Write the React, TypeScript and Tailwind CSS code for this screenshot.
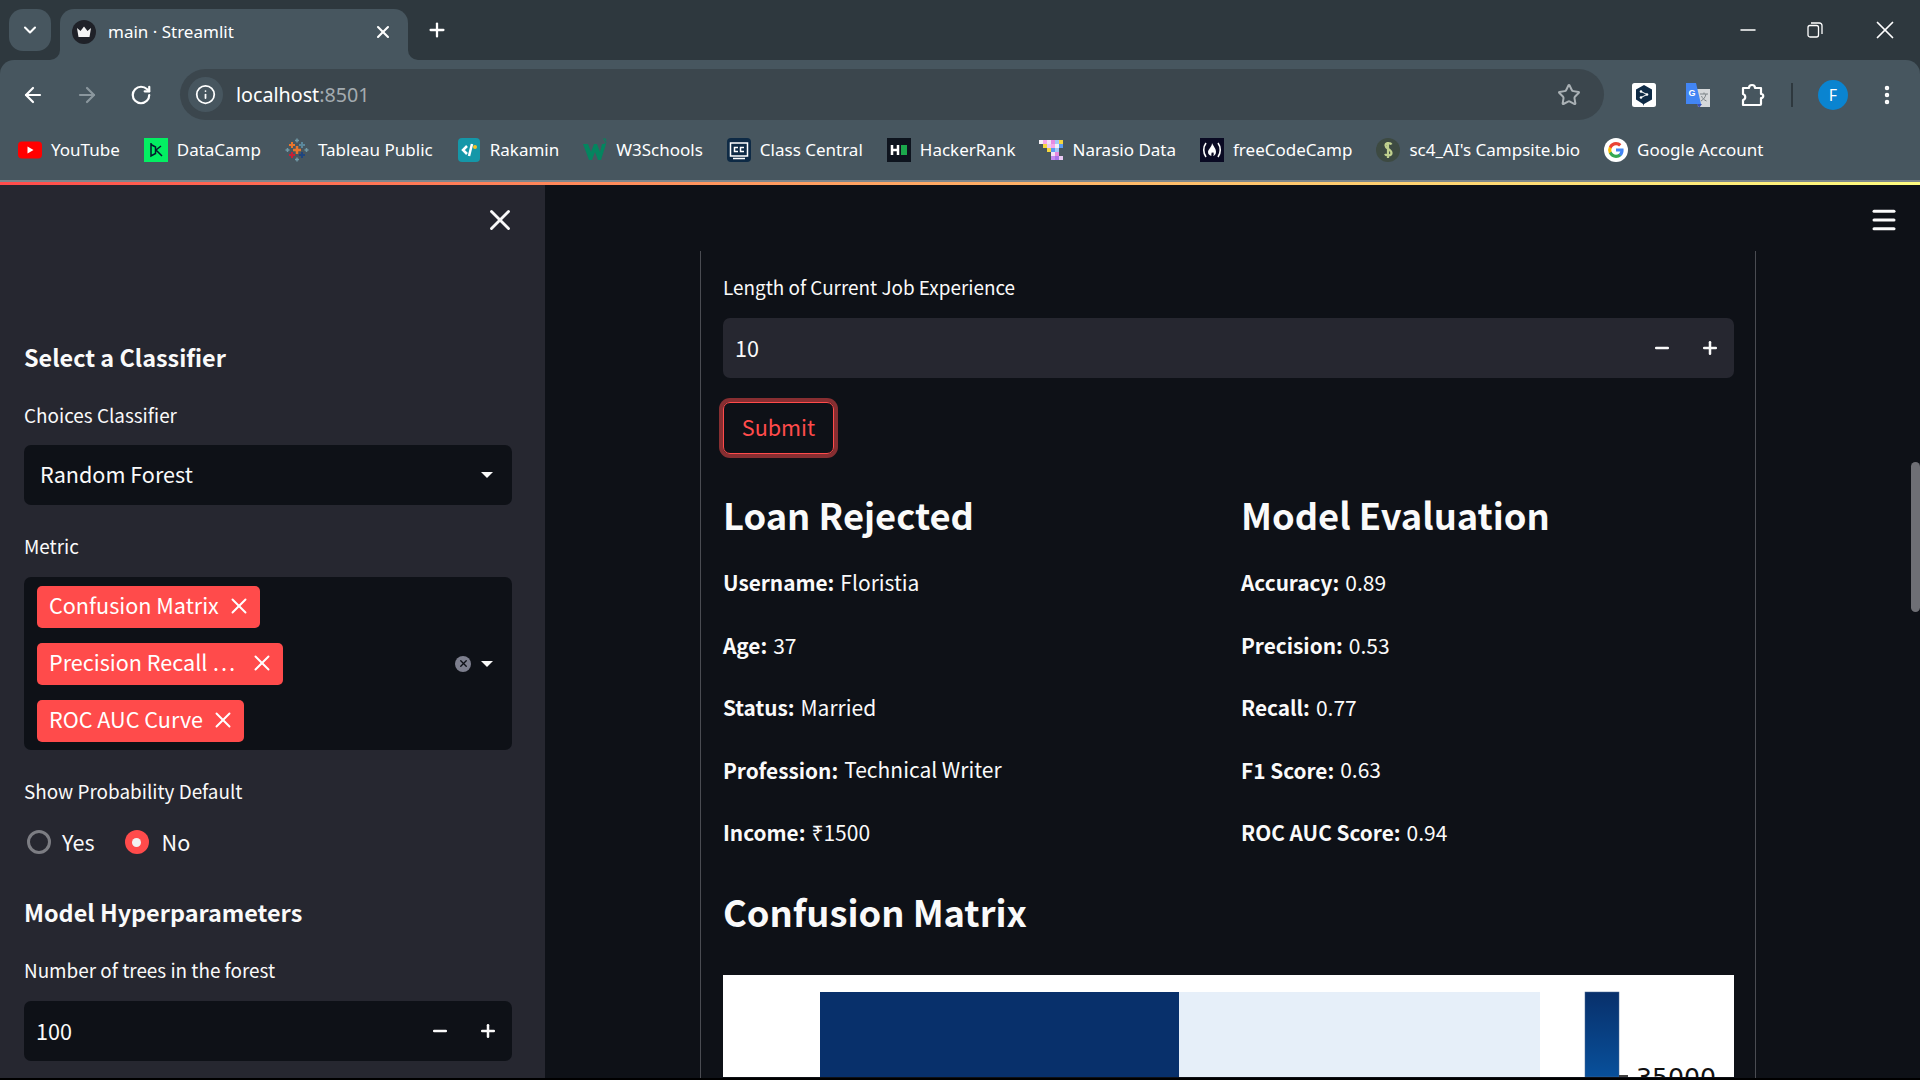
import React from 'react';
import { ArrowLeft, ArrowRight, ChevronDown, Info, Menu, Minus, MoreVertical, Plus, RotateCw, Star, X } from 'lucide-react';

const YouTubeIcon = () => (
  <svg width="24" height="24" viewBox="0 0 24 24">
    <rect x="0" y="3.500" width="24" height="17" rx="4" fill="#f00" />
    <path d="M9.500 8.500v7l6-3.500z" fill="#fff" />
  </svg>
);

const DataCampIcon = () => (
  <svg width="24" height="24" viewBox="0 0 24 24">
    <rect width="24" height="24" fill="#03ef62" />
    <path d="M7 5v13l4.500-2.500V9L7 6.500M12 12l5-4M12 12l6 6" fill="none" stroke="#05192d" strokeWidth="1.500" />
  </svg>
);

const TableauIcon = () => (
  <svg width="24" height="24" viewBox="0 0 24 24" strokeWidth="2" fill="none">
    <path d="M8 12h8M12 8v8" stroke="#e8762d" strokeWidth="2.500" />
    <path d="M4 7h6M7 4v6" stroke="#e8762d" />
    <path d="M14 7h6M17 4v6" stroke="#5b879b" />
    <path d="M4 17h6M7 14v6" stroke="#c72035" />
    <path d="M14 17h6M17 14v6" stroke="#1f457e" />
    <path d="M10 2.500h4M12 .5v4M10 21.500h4M12 19.500v4M.5 12h4M2.500 10v4M19.500 12h4M21.500 10v4" stroke="#7099a6" strokeWidth="1.500" />
  </svg>
);

const RakaminIcon = () => (
  <svg width="24" height="24" viewBox="0 0 24 24">
    <rect x="1" y="0" width="22" height="24" rx="4" fill="#1597a8" />
    <path d="M10 8l-4 4 4 4M15 6l-3 12" fill="none" stroke="#fff" strokeWidth="2.500" />
    <circle cx="18" cy="9" r="2" fill="#f7c325" />
  </svg>
);

const W3Icon = () => (
  <svg width="24" height="24" viewBox="0 0 24 24">
    <path d="M0 6h5l3 8 3-8h3l3 8 2-8h4l-5 16h-3l-3-8-3 8H6z" fill="#04855f" />
    <path d="M20 1h3l-1.500 2c1 0 1.500 .8 1.500 1.500 0 1-1 1.500-2 1.500" fill="none" stroke="#04855f" strokeWidth="1" />
  </svg>
);

const ClassCentralIcon = () => (
  <svg width="24" height="24" viewBox="0 0 24 24">
    <rect width="24" height="24" rx="4" fill="#0e2a45" />
    <rect x="3.500" y="5" width="17" height="13" fill="none" stroke="#fff" strokeWidth="1.500" />
    <path d="M11 9.500H7.500v4H11M17 9.500h-3.500v4H17M6 20.500h12" fill="none" stroke="#fff" strokeWidth="1.500" />
  </svg>
);

const HackerRankIcon = () => (
  <svg width="24" height="24" viewBox="0 0 24 24">
    <rect width="24" height="24" fill="#0e141e" />
    <path d="M5 7v10M11 7v10M5 12h6" stroke="#fff" strokeWidth="2.500" />
    <rect x="14" y="7" width="6" height="10" fill="#1ba94c" />
  </svg>
);

const NarasioIcon = () => {
  const cells: [number, number, string][] = [
    [0, 0, '#f6f1f6'], [4, 0, '#f6a6ea'], [8, 0, '#f2e3f7'], [12, 0, '#e78ae0'], [16, 0, '#a3c8f5'], [20, 0, '#f5d63d'],
    [4, 4, '#f5d63d'], [8, 4, '#e8c9f5'], [12, 4, '#f6a6ea'], [16, 4, '#f0f0f8'], [20, 4, '#5d9bf0'],
    [8, 8, '#f5d63d'], [12, 8, '#5d9bf0'], [16, 8, '#a3c8f5'],
    [16, 12, '#e78ae0'], [12, 12, '#f2e3f7'],
    [12, 16, '#c58af0'], [16, 16, '#a874ea'], [20, 16, '#e8c9f5'],
  ];
  return (
    <svg width="24" height="24" viewBox="0 0 24 24">
      {cells.map(([x, y, c]) => (
        <rect key={`${x}-${y}`} x={x} y={y + 2} width="4" height="4" fill={c} />
      ))}
    </svg>
  );
};

const FreeCodeCampIcon = () => (
  <svg width="24" height="24" viewBox="0 0 24 24">
    <rect width="24" height="24" fill="#0a0a23" />
    <path d="M6 5c-3 4-3 10 0 14M18 5c3 4 3 10 0 14" fill="none" stroke="#fff" strokeWidth="1.600" />
    <path d="M12 5c1 3 4 5 4 9 0 2.500-2 4-3 4 1-1 1-2.500 0-4-.5 1-1 1-1.500 .5 .2 1.500-.5 2.500 0 3.500-1.500-.3-3.500-1.500-3.500-4 0-3 4-5 4-9z" fill="#fff" />
  </svg>
);

const ChainIcon = () => (
  <svg width="24" height="24" viewBox="0 0 24 24">
    <circle cx="12" cy="12" r="12" fill="#3d4a42" />
    <path d="M15.500 6.500c-1-2-6-2-6 1 0 3.500 6 3.500 6 7.500 0 3-5.500 3-6.500 1M12 4v16" fill="none" stroke="#c0d08e" strokeWidth="2.200" />
  </svg>
);

const GoogleIcon = () => (
  <svg width="24" height="24" viewBox="0 0 24 24">
    <circle cx="12" cy="12" r="12" fill="#fff" />
    <path d="M19.600 12.200c0-.6-.05-1.100-.15-1.600H12v3h4.300c-.2 1-.75 1.800-1.600 2.400v2h2.550c1.500-1.400 2.350-3.400 2.350-5.800z" fill="#4285f4" />
    <path d="M12 20c2.150 0 3.950-.7 5.250-1.950l-2.550-2c-.7.5-1.600.75-2.700.75-2.050 0-3.800-1.400-4.450-3.250H4.950v2.050C6.250 18.200 8.950 20 12 20z" fill="#34a853" />
    <path d="M7.550 13.550c-.35-1-.35-2.100 0-3.100V8.400h-2.600a8 8 0 0 0 0 7.200z" fill="#fbbc05" />
    <path d="M12 7.200c1.200 0 2.250.4 3.100 1.200l2.250-2.250C15.950 4.800 14.150 4 12 4 8.950 4 6.250 5.800 4.950 8.400l2.600 2.050C8.200 8.600 9.950 7.200 12 7.200z" fill="#ea4335" />
  </svg>
);

const DeepLIcon = () => (
  <svg width="24" height="24" viewBox="0 0 24 24">
    <rect width="24" height="24" rx="2.500" fill="#fff" />
    <path d="M12 2l8 4.500v10L12 21l-1 2v-2l-7-4.500v-10z" fill="#0f2b46" />
    <path d="M9 8.500l6 3-6 3" fill="none" stroke="#fff" strokeWidth="1" />
    <circle cx="9" cy="8.500" r="1.300" fill="#fff" />
    <circle cx="15" cy="11.500" r="1.300" fill="#fff" />
    <circle cx="9" cy="14.500" r="1.300" fill="#fff" />
  </svg>
);

const TranslateIcon = () => (
  <svg width="24" height="24" viewBox="0 0 24 24">
    <path d="M10 6h14v18H12z" fill="#d5d8da" />
    <path d="M14 11h8M18 9.500v1.500M20 11c-.5 3-2.500 5.500-5 7M15.500 13c.8 2 2.500 4 5 5" fill="none" stroke="#7d8488" strokeWidth="1" />
    <path d="M0 0h10l5 21H0z" fill="#4285f4" />
    <path d="M11 21h5l-3 4z" fill="#3a4fb3" />
    <text x="2.500" y="13" fontSize="9" fontWeight="700" fill="#fff" fontFamily="Liberation Sans, sans-serif">G</text>
  </svg>
);

const ExtensionIcon = () => (
  <svg width="24" height="24" viewBox="0 0 24 24" fill="none" stroke="#fff" strokeWidth="2.200" strokeLinejoin="round">
    <path d="M2 5h6c0-4 6-4 6 0h6v6c3 0 3 4 0 4v6a1 1 0 0 1-1 1H2v-5c3-1 3-5 0-6z" />
  </svg>
);

const RestoreIcon = () => (
  <svg width="16" height="16" viewBox="0 0 16 16" fill="none" stroke="#fff" strokeWidth="1.300">
    <rect x="1" y="3.500" width="10.500" height="11.500" rx="2" />
    <path d="M4 1h8.500A2.500 2.500 0 0 1 15 3.500V12" />
  </svg>
);

const CrownFavicon = () => (
  <svg width="24" height="24" viewBox="0 0 24 24">
    <circle cx="12" cy="12" r="12" fill="#1f2128" />
    <path d="M5 8l3.500 3L12 6.500l3.500 4.500L19 8l-1.500 9h-11z" fill="#f4f4f4" />
  </svg>
);

const CaretDown = () => (
  <svg width="12" height="6" viewBox="0 0 12 6">
    <path d="M0 0h12L6 6z" fill="#fafafa" />
  </svg>
);

const bookmarks: { label: string; icon: React.ReactNode }[] = [
  { label: 'YouTube', icon: <YouTubeIcon /> },
  { label: 'DataCamp', icon: <DataCampIcon /> },
  { label: 'Tableau Public', icon: <TableauIcon /> },
  { label: 'Rakamin', icon: <RakaminIcon /> },
  { label: 'W3Schools', icon: <W3Icon /> },
  { label: 'Class Central', icon: <ClassCentralIcon /> },
  { label: 'HackerRank', icon: <HackerRankIcon /> },
  { label: 'Narasio Data', icon: <NarasioIcon /> },
  { label: 'freeCodeCamp', icon: <FreeCodeCampIcon /> },
  { label: "sc4_AI's Campsite.bio", icon: <ChainIcon /> },
  { label: 'Google Account', icon: <GoogleIcon /> },
];

const chips: { label: string; width: string }[] = [
  { label: 'Confusion Matrix', width: 'w-[223px]' },
  { label: 'Precision Recall …', width: 'w-[246px]' },
  { label: 'ROC AUC Curve', width: 'w-[207px]' },
];

const applicant: [string, string][] = [
  ['Username:', 'Floristia'],
  ['Age:', '37'],
  ['Status:', 'Married'],
  ['Profession:', 'Technical Writer'],
  ['Income:', '₹1500'],
];

const scores: [string, string][] = [
  ['Accuracy:', '0.89'],
  ['Precision:', '0.53'],
  ['Recall:', '0.77'],
  ['F1 Score:', '0.63'],
  ['ROC AUC Score:', '0.94'],
];

const FieldLabel = ({ children, className = '' }: { children: React.ReactNode; className?: string }) => (
  <div className={`flex h-[30px] items-center text-[18.9px] text-[#fafafa] ${className}`}>{children}</div>
);

const SideHeading = ({ children, className = '' }: { children: React.ReactNode; className?: string }) => (
  <div className={`flex h-[36px] items-center text-[23.4px] font-semibold text-[#fafafa] ${className}`}>{children}</div>
);

const PageHeading = ({ children, className = '' }: { children: React.ReactNode; className?: string }) => (
  <div className={`flex h-[40px] items-center pb-[2px] text-[36.3px] font-semibold text-[#fafafa] ${className}`}>{children}</div>
);

const Stepper = ({ value, bg }: { value: string; bg: string }) => (
  <div className={`flex h-[60px] items-center rounded-[7px] pl-3 pr-[14px] ${bg}`}>
    <span className="flex-1 text-[21.6px] text-[#fafafa]">{value}</span>
    <div className="flex items-center gap-[28px]">
      <Minus size={20} strokeWidth={3} className="text-[#fafafa]" />
      <Plus size={20} strokeWidth={3} className="text-[#fafafa]" />
    </div>
  </div>
);

const StatRows = ({ rows }: { rows: [string, string][] }) => (
  <div className="mt-[16.8px] flex flex-col">
    {rows.map(([k, v]) => (
      <div key={k} className="flex h-[62.4px] items-center gap-[6px] text-[21px] text-[#fafafa]">
        <span className="text-[20.8px] font-semibold">{k}</span>
        <span>{v}</span>
      </div>
    ))}
  </div>
);

const ConfusionChart = () => (
  <svg width="1011" height="102" viewBox="0 0 1011 102" className="mt-[43px] block bg-white">
    <defs>
      <linearGradient id="cbar" x1="0" y1="0" x2="0" y2="1">
        <stop offset="0" stopColor="#08306b" />
        <stop offset="1" stopColor="#08509b" />
      </linearGradient>
    </defs>
    <rect x="97" y="17" width="359" height="85" fill="#08306b" />
    <rect x="456" y="17" width="361" height="85" fill="#e6eff9" />
    <rect x="862" y="17" width="34" height="85" fill="url(#cbar)" stroke="#4a6a95" strokeWidth="0.500" />
    <path d="M896 101h9" stroke="#000" strokeWidth="1.500" />
    <text x="913" y="111" fontSize="25.2" fill="#111" fontFamily="DejaVu Sans, sans-serif">35000</text>
  </svg>
);

export default function App() {
  return (
    <div className="flex h-screen w-full flex-col overflow-hidden bg-black font-['Noto_Sans_CJK_SC','Noto_Sans',sans-serif]">
      {/* browser chrome */}
      <div className="bg-[#2e383e] font-['Noto_Sans',sans-serif] text-white">
        <div className="flex h-[60px] pl-[9px] pt-[9px]">
          <div className="flex h-[42px] w-[42px] items-center justify-center rounded-[14px] bg-[#47565f]">
            <ChevronDown size={20} strokeWidth={2.5} />
          </div>
          <div className="relative ml-[9px] flex h-[51px] w-[348px] items-center rounded-t-[14px] bg-[#47565f] pb-[6px] pl-[12px] pr-[15px]">
            <span className="absolute -left-[10px] bottom-0 h-[10px] w-[10px] bg-[#47565f]">
              <span className="block h-full w-full rounded-br-[10px] bg-[#2e383e]" />
            </span>
            <CrownFavicon />
            <span className="ml-[12px] flex-1 text-[17px]">main · Streamlit</span>
            <X size={20} strokeWidth={2.5} />
            <span className="absolute -right-[12px] bottom-0 h-[10px] w-[12px] bg-[#47565f]">
              <span className="block h-full w-full rounded-bl-[10px] bg-[#2e383e]" />
            </span>
          </div>
          <div className="ml-[18px] flex h-[42px] items-center">
            <Plus size={22} strokeWidth={2.5} />
          </div>
          <div className="ml-auto flex h-[42px] items-center pr-[20px]">
            <Minus size={24} strokeWidth={1.5} />
            <div className="ml-[47px]"><RestoreIcon /></div>
            <X size={30} strokeWidth={1.4} className="ml-[47px]" />
          </div>
        </div>
        <div className="rounded-t-[14px] bg-[#47565f]">
          <div className="flex h-[69px] items-center pl-[21px] pr-[21px]">
            <ArrowLeft size={24} strokeWidth={2.2} />
            <ArrowRight size={24} strokeWidth={2.2} className="ml-[30px] text-[#8b979e]" />
            <RotateCw size={22} strokeWidth={2.4} className="ml-[31px]" />
            <div className="ml-[28px] flex h-[51px] w-[1424px] items-center rounded-full bg-[#3b464d] pl-[8px] pr-[23px]">
              <div className="flex h-[35px] w-[35px] items-center justify-center rounded-full bg-[#47565f]">
                <Info size={21} strokeWidth={2} />
              </div>
              <span className="ml-[13px] flex-1 text-[19.7px]">
                localhost<span className="text-[#a3abb0]">:8501</span>
              </span>
              <Star size={24} strokeWidth={2} className="text-[#aab1b5]" />
            </div>
            <div className="ml-[28px]"><DeepLIcon /></div>
            <div className="ml-[30px]"><TranslateIcon /></div>
            <div className="ml-[31px]"><ExtensionIcon /></div>
            <div className="ml-[26px] h-[24px] w-[2px] bg-[#2e383e]" />
            <div className="ml-[25px] flex h-[30px] w-[30px] items-center justify-center rounded-full bg-[#0a84d0] text-[16px]">F</div>
            <MoreVertical size={24} strokeWidth={2.5} className="ml-[27px]" />
          </div>
          <div className="flex h-[51px] items-center gap-[24px] pb-[9px] pl-[18px]">
            {bookmarks.map((b) => (
              <div key={b.label} className="flex items-center gap-[9px] text-[17px]">
                {b.icon}
                <span>{b.label}</span>
              </div>
            ))}
          </div>
        </div>
        <div className="h-[2px] bg-[#7c868c]" />
      </div>
      <div className="h-[3px] bg-linear-to-r from-[#ff4b4b] to-[#fffd80]" />

      {/* streamlit page */}
      <div className="relative flex h-[893px] overflow-hidden bg-[#0e1117]">
        <aside className="w-[545px] shrink-0 bg-[#262730] pl-[24px] pr-[33px]">
          <div className="-mr-[5px] flex h-[155px] justify-end pt-[18px]">
            <X size={34} strokeWidth={2} className="text-[#fafafa]" />
          </div>
          <SideHeading>Select a Classifier</SideHeading>
          <FieldLabel className="mt-[24px]">Choices Classifier</FieldLabel>
          <div className="mt-[15px] flex h-[60px] items-center justify-between rounded-[7px] bg-[#0e1117] pb-[1px] pl-[16px] pr-[19px] text-[21.6px] text-[#fafafa]">
            <span>Random Forest</span>
            <CaretDown />
          </div>
          <FieldLabel className="mt-[26px]">Metric</FieldLabel>
          <div className="mt-[16px] flex h-[173px] items-center rounded-[7px] bg-[#0e1117] pl-[13px] pr-[19px]">
            <div className="flex flex-1 flex-col gap-[15px]">
              {chips.map((c) => (
                <div key={c.label} className={`flex h-[42px] items-center justify-between rounded-[5px] bg-[#ff4b4b] pb-[2px] pl-[12px] pr-[8px] text-[21.6px] whitespace-nowrap text-white ${c.width}`}>
                  <span>{c.label}</span>
                  <X size={26} strokeWidth={1.8} />
                </div>
              ))}
            </div>
            <div className="flex h-[16px] w-[16px] items-center justify-center rounded-full bg-[#7d7f8e]">
              <X size={11} strokeWidth={3} className="text-[#0e1117]" />
            </div>
            <div className="ml-[10px]"><CaretDown /></div>
          </div>
          <FieldLabel className="mt-[26px]">Show Probability Default</FieldLabel>
          <div className="mt-[24px] flex h-[24px] items-center text-[21.6px] text-[#fafafa]">
            <div className="ml-[3px] h-[24px] w-[24px] rounded-full border-[3px] border-[#7c7d83]" />
            <span className="ml-[11px]">Yes</span>
            <div className="ml-[30px] flex h-[24px] w-[24px] items-center justify-center rounded-full bg-[#ff4b4b]">
              <div className="h-[9px] w-[9px] rounded-full bg-[#f2f2f2]" />
            </div>
            <span className="ml-[13px]">No</span>
          </div>
          <SideHeading className="mt-[41px]">Model Hyperparameters</SideHeading>
          <FieldLabel className="mt-[24px]">Number of trees in the forest</FieldLabel>
          <div className="mt-[16px]">
            <Stepper value="100" bg="bg-[#0e1117]" />
          </div>
        </aside>

        <main className="relative flex-1 overflow-hidden">
          <div className="ml-[155px] mt-[66px] w-[1056px] border-x border-[#4a4c52] pb-[40px] pl-[22px] pr-[21px] pt-[21px]">
            <FieldLabel>Length of Current Job Experience</FieldLabel>
            <div className="mt-[16px]">
              <Stepper value="10" bg="bg-[#262730]" />
            </div>
            <button className="mt-[24px] flex h-[52px] w-[111px] items-center justify-center rounded-[7px] border border-[#ff4b4b] pb-[2px] text-[21.6px] text-[#ff4b4b] ring-4 ring-[#ff4b4b]/50">
              Submit
            </button>
            <div className="mt-[41px] grid grid-cols-[518px_1fr]">
              <div>
                <PageHeading>Loan Rejected</PageHeading>
                <StatRows rows={applicant} />
              </div>
              <div>
                <PageHeading>Model Evaluation</PageHeading>
                <StatRows rows={scores} />
              </div>
            </div>
            <PageHeading className="mt-[28.6px]">Confusion Matrix</PageHeading>
            <ConfusionChart />
          </div>
          <Menu size={30} strokeWidth={2.4} className="absolute right-[21px] top-[20px] text-[#fafafa]" />
          <div className="absolute right-0 top-[277px] h-[150px] w-[9px] rounded-full bg-[#6e6f75]" />
        </main>
      </div>
    </div>
  );
}
